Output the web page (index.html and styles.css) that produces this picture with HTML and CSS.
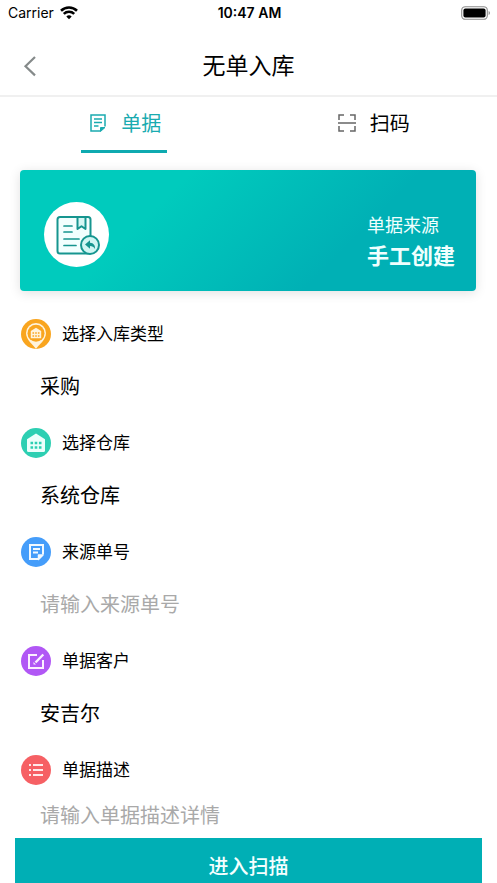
FILE: index.html
```html
<!DOCTYPE html>
<html lang="zh-CN">
<head>
<meta charset="utf-8">
<meta name="viewport" content="width=device-width, initial-scale=1">
<title>无单入库</title>
<link rel="stylesheet" href="styles.css">
</head>
<body>
<div class="status">
  <div class="carrier">
    <span>Carrier</span>
    <svg width="18" height="14" viewBox="0 0 18 14" fill="none" stroke="#000" stroke-width="2.6" aria-hidden="true">
      <path d="M1 4.8a11.5 11.5 0 0 1 16 0"/>
      <path d="M3.8 7.9a7.5 7.5 0 0 1 10.4 0"/>
      <path d="M9 13.2 6.3 10.5a3.9 3.9 0 0 1 5.4 0z" fill="#000" stroke="none"/>
    </svg>
  </div>
  <time class="clock">10:47 AM</time>
  <svg class="battery" width="30" height="14" viewBox="0 0 30 14" aria-hidden="true">
    <rect x=".7" y=".7" width="25.6" height="12.6" rx="3.6" fill="none" stroke="#8c8c8c" stroke-width="1.1"/>
    <rect x="2.4" y="2.4" width="22.2" height="9.2" rx="2" fill="#000"/>
    <path d="M27.6 5v4c1.8-.6 1.8-3.4 0-4z" fill="#8c8c8c"/>
  </svg>
</div>

<header class="nav">
  <button class="back" type="button" aria-label="返回">
    <svg width="14" height="22" viewBox="0 0 14 22" fill="none" stroke="#858a8a" stroke-width="2.2"><path d="M12 2 2.500 11.200 12 20.400"/></svg>
  </button>
  <h1>无单入库</h1>
</header>

<nav class="tabs">
  <a class="tab active" href="#form">
    <svg width="18" height="20" viewBox="0 0 18 20" fill="none" stroke="currentColor" stroke-width="1.5" aria-hidden="true">
      <path d="M11.500 17H2V1h14v11.500"/><path d="M11.500 17.500v-4h4.500z" fill="currentColor" stroke-width="1"/>
      <path d="M5 5h8M5 8.500h8M5 12h4.500"/>
    </svg>
    <span>单据</span>
  </a>
  <a class="tab" href="#scan">
    <svg width="18" height="20" viewBox="0 0 18 20" fill="none" stroke="#666" stroke-width="1.5" aria-hidden="true">
      <path d="M1 6V1h5M12 1h5v5M1 12v5h5M12 17h5v-5M0 9h18"/>
    </svg>
    <span>扫码</span>
  </a>
</nav>

<main id="form">
  <section class="card">
    <div class="badge">
      <svg width="48" height="42" viewBox="-3 -2 48 42" fill="none" stroke="#16958f" stroke-width="2" stroke-linecap="round" stroke-linejoin="round" aria-hidden="true">
        <rect x="1.500" y="1" width="33" height="36.500" rx="2.500" fill="#f2fffe"/>
        <path d="M21.500 1v12l4-2.800 4 2.800V1z" fill="#d5f7f4"/>
        <path d="M8 10h8M8 16h8M8 23h15M8 29.500h12" stroke-width="1.700"/>
        <circle cx="34" cy="29" r="9" fill="#d0f6f3"/>
        <path d="M29 28.500l5-4.300v2.500c3.800.2 5.300 2.800 5 6.300-1.400-2.200-2.700-2.900-5-2.900v2.600z" fill="#16958f" stroke="none"/>
      </svg>
    </div>
    <div class="source">
      <span class="source-name">单据来源</span>
      <strong>手工创建</strong>
    </div>
  </section>

  <form>
    <div class="field">
      <label for="type">
        <svg width="30" height="30" viewBox="0 0 30 30" aria-hidden="true">
          <circle cx="15" cy="15" r="15" fill="#f9a51f"/>
          <path d="M15 30C12 25.500 5 21 5 14a10 10 0 0 1 20 0c0 7-7 11.500-10 16z" fill="#fff3dc"/>
          <circle cx="15" cy="14.300" r="8.500" fill="#f9a51f"/>
          <path d="M9.800 12 15 8.800l5.200 3.200v7.200H9.800z" fill="#fff3dc"/>
          <path d="M11.500 14h7M11.500 17h7" stroke="#f9a51f" stroke-width="1.500" stroke-dasharray="1.600 1.100"/>
        </svg>
        <span>选择入库类型</span>
      </label>
      <select id="type"><option>采购</option></select>
    </div>
    <div class="field">
      <label for="warehouse">
        <svg width="30" height="30" viewBox="0 0 30 30" aria-hidden="true">
          <circle cx="15" cy="15" r="15" fill="#2dcfb2"/>
          <path d="M6 11.300 15 5.500l9 5.800V22.500a1.500 1.500 0 0 1-1.500 1.500h-15A1.500 1.500 0 0 1 6 22.500z" fill="#ecfffb"/>
          <path d="M9.500 15h11M9.500 19.500h11" stroke="#2dcfb2" stroke-width="2.600" stroke-dasharray="2.600 1.600"/>
        </svg>
        <span>选择仓库</span>
      </label>
      <select id="warehouse"><option>系统仓库</option></select>
    </div>
    <div class="field">
      <label for="number">
        <svg width="30" height="30" viewBox="0 0 30 30" fill="none" stroke="#f2f9ff" stroke-width="2" aria-hidden="true">
          <circle cx="15" cy="15" r="15" fill="#459dfa" stroke="none"/>
          <path d="M17.500 22H9V8h13v9.500"/><path d="M17.500 22.500V18H22z" fill="#f2f9ff" stroke-width="1.500" stroke-linejoin="round"/><path d="M12 12h7M12 15.500h5"/>
        </svg>
        <span>来源单号</span>
      </label>
      <input id="number" type="text" placeholder="请输入来源单号">
    </div>
    <div class="field">
      <label for="customer">
        <svg width="30" height="30" viewBox="0 0 30 30" fill="none" stroke="#fbefff" stroke-width="2" aria-hidden="true">
          <circle cx="15" cy="15" r="15" fill="#b157f5" stroke="none"/>
          <path d="M16 9H8v13h14v-8"/><path d="m14.500 16.500 7.800-8" stroke-width="2.400"/><path d="M12.500 16v2.500H15z" fill="#fbefff" stroke="none"/>
        </svg>
        <span>单据客户</span>
      </label>
      <select id="customer"><option>安吉尔</option></select>
    </div>
    <div class="field compact">
      <label for="note">
        <svg width="30" height="30" viewBox="0 0 30 30" fill="none" stroke="#ffe9e9" stroke-width="2" aria-hidden="true">
          <circle cx="15" cy="15" r="15" fill="#f66064" stroke="none"/>
          <path d="M8 10h2M12 10h10M8 15h2M12 15h10M8 20h2M12 20h10"/>
        </svg>
        <span>单据描述</span>
      </label>
      <input id="note" type="text" placeholder="请输入单据描述详情">
    </div>
    <button class="submit" type="submit">进入扫描</button>
  </form>
</main>
</body>
</html>
```
FILE: styles.css
```css
* {
  box-sizing: border-box;
}

body {
  margin: 0;
  background: #fff;
  color: #000;
  font-family: Inter, "Noto Sans CJK SC", sans-serif;
  font-size: 20px;
}

svg {
  display: block;
  flex: none;
}

button,
input,
select {
  font: inherit;
  border: 0;
  border-radius: 0;
  background: none;
  padding: 0;
}

.status {
  display: grid;
  grid-template-columns: 1fr auto 1fr;
  align-items: center;
  height: 25px;
  padding: 0 6px 0 8px;
  font-size: 14px;
}

.carrier {
  display: flex;
  align-items: center;
  gap: 6px;
}

.clock {
  font-weight: 600;
}

.battery {
  justify-self: end;
}

.nav {
  display: grid;
  grid-template-columns: 60px 1fr 60px;
  align-items: center;
  height: 72px;
  padding-top: 12px;
  border-bottom: 2px solid #f0f0f0;
}

.back {
  display: flex;
  align-items: center;
  height: 44px;
  padding-left: 23px;
}

h1 {
  margin: 0;
  font-size: 23px;
  font-weight: 400;
  line-height: 32px;
  text-align: center;
}

.tabs {
  display: grid;
  grid-template-columns: 1fr 1fr;
  justify-items: center;
}

.tab {
  display: flex;
  align-items: center;
  gap: 14px;
  height: 56px;
  padding: 0 6px 0 8px;
  border-bottom: 3px solid transparent;
  color: #000;
  line-height: 30px;
  text-decoration: none;
}

.tab.active {
  color: #1aabb0;
  border-color: #0eaab0;
}

.card {
  display: flex;
  align-items: center;
  justify-content: space-between;
  height: 121px;
  margin: 17px 21px 28px 20px;
  padding: 8px 21px 0 24px;
  border-radius: 4px;
  background: linear-gradient(135deg, #00cbbd 30%, #00b0b5 70%);
  box-shadow: 0 2px 12px rgba(0, 0, 0, 0.12);
  color: #effffe;
}

.badge {
  display: grid;
  place-items: center;
  width: 65px;
  height: 65px;
  border-radius: 50%;
  background: #fff;
}

.source {
  display: flex;
  flex-direction: column;
  padding-top: 12px;
}

.source-name {
  font-size: 18px;
  line-height: 30px;
}

.source strong {
  font-size: 22px;
  font-weight: 700;
  line-height: 30px;
}

.field {
  display: flex;
  flex-direction: column;
  gap: 16px;
  margin: 0 21px 19px;
}

.field label {
  display: flex;
  align-items: center;
  gap: 11px;
  height: 30px;
  font-size: 17px;
  line-height: 24px;
}

.field input,
.field select {
  appearance: none;
  height: 44px;
  margin-left: 19px;
  color: #000;
  outline: 0;
}

.field input::placeholder {
  color: #a9a9a9;
  opacity: 1;
}

.field.compact {
  margin-bottom: 7px;
}

.field.compact input {
  height: 30px;
}

.submit {
  display: block;
  width: calc(100% - 30px);
  margin: 0 15px;
  padding: 15px 0 1px;
  background: #00afb5;
  color: #f4ffff;
  font-weight: 500;
  line-height: 29px;
}
```
